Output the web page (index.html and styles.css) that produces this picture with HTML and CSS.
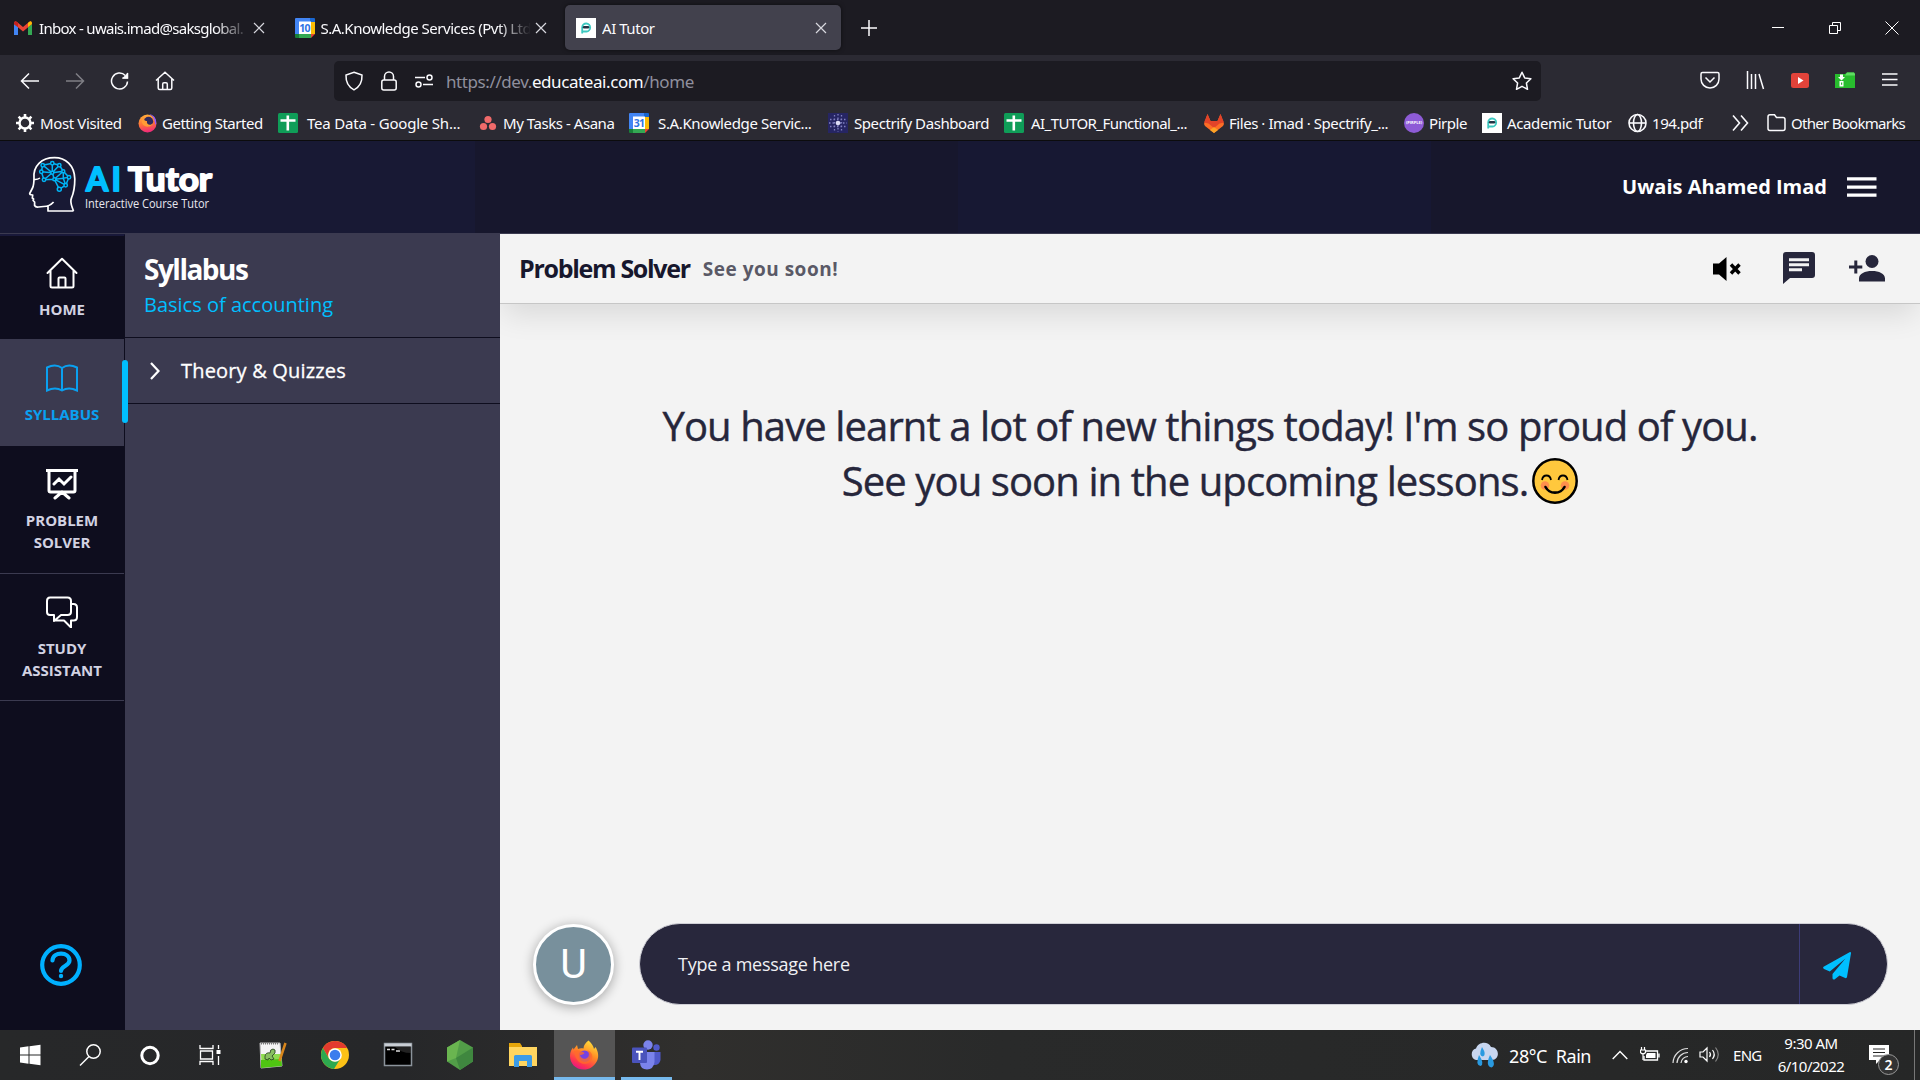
FILE: index.html
```html
<!DOCTYPE html>
<html lang="en">
<head>
<meta charset="utf-8">
<title>AI Tutor</title>
<link rel="stylesheet" href="styles.css">
</head>
<body>
<svg class="defs" aria-hidden="true">
  <symbol id="close" viewBox="0 0 12 12"><path d="M1 1l10 10M11 1L1 11" stroke="currentColor" stroke-width="1.2" fill="none"/></symbol>
  <symbol id="sheets" viewBox="0 0 20 20"><rect width="20" height="20" rx="1.5" fill="#0f9d58"/><path d="M8.5 2.5h2.6v3.7h6.4v2.6h-6.4V17.500H8.500V8.800H2.500V6.200h6z" fill="#fff"/></symbol>
  <symbol id="tutor" viewBox="0 0 20 20"><path fill="#fff" d="M0 0h20v20H0z"/><path d="M6.200 15.500V9.200a4 4 0 1 1 4.300 4.300H7" fill="none" stroke="#3cc8c0" stroke-width="1.800"/><rect x="6.800" y="8" width="6.500" height="2.600" rx="1.300" fill="#234"/></symbol>
  <symbol id="cal" viewBox="0 0 20 20"><path fill="#4285f4" d="M1 0h14v4H4v12H0V1q0-1 1-1z"/><path fill="#1967d2" d="M15 0h4q1 0 1 1v3h-5z"/><path fill="#fbbc04" d="M16 4h4v12h-4z"/><path fill="#34a853" d="M4 16h12v4H4z"/><path fill="#188038" d="M0 16h4v4H1q-1 0-1-1z"/><path fill="#ea4335" d="M16 16h4l-4 4z"/><path fill="#fff" d="M4 3.500h12V16H4z"/></symbol>
  <linearGradient id="fx" x1=".8" y1="0" x2=".3" y2="1"><stop offset="0" stop-color="#ffe63d"/><stop offset=".45" stop-color="#ff8a24"/><stop offset=".8" stop-color="#ff3450"/><stop offset="1" stop-color="#e31587"/></linearGradient>
  <symbol id="firefox" viewBox="0 0 30 30"><path fill="url(#fx)" d="M19.500.500c3.500 3 5 6 5.500 8.500l1.500-2c3 5 3.500 10 1.500 14-3 6-8 8.500-13 8.500C6 29.500 1 23 1 16c0-4 1.500-6.500 3-8.500l.5 2L8 5l1 4c2-1 3.500-1 5.500-.5 0-3 2-6 5-8z"/><path d="M10 13c4-4 9-3 11 1 1.500 4-1 8-5 8s-7-4-6-9z" fill="#7542e5"/><path d="M5 11c4-2 8 0 10.500 2-1 1.500-3 2-4.500 2 1 4.500 6 5 8.500 1.500 1-3 0-5-1.500-6.500 5 1.500 7 7 4 11-4 4-10 3.500-13 0-2.500-3-3.500-6-4-10z" fill="#ff6a2b" opacity=".8"/></symbol>
  <linearGradient id="fy" x1=".2" y1="0" x2=".4" y2="1"><stop offset="0" stop-color="#ffb33a"/><stop offset=".55" stop-color="#ff7139"/><stop offset="1" stop-color="#f0297a"/></linearGradient>
</svg>

<div class="tabs">
  <div class="tab">
    <svg class="fav" viewBox="0 0 20 20"><path fill="#4285f4" d="M1 17V6l4 3v8z"/><path fill="#34a853" d="M15 17V9l4-3v11z"/><path fill="#ea4335" d="M1 6q0-4 3-2l6 5 6-5q3-2 3 2l-9 7.500z"/><path fill="#c5221f" d="M1 6q0-4 3-2l1 1v4z"/><path fill="#fbbc04" d="M15 9V5l1-1q3-2 3 2z"/></svg>
    <span class="title fade t1">Inbox - uwais.imad@saksglobal.</span><svg class="x"><use href="#close"/></svg>
  </div>
  <div class="tab">
    <span class="calbox"><svg><use href="#cal"/></svg><b>10</b></span>
    <span class="title fade t2">S.A.Knowledge Services (Pvt) Ltd</span><svg class="x"><use href="#close"/></svg>
  </div>
  <div class="tab active">
    <svg class="fav"><use href="#tutor"/></svg>
    <span class="title">AI Tutor</span><svg class="x"><use href="#close"/></svg>
  </div>
  <svg class="plus" viewBox="0 0 16 16"><path d="M8 0v16M0 8h16" stroke="#fbfbfe" stroke-width="1.500"/></svg>
  <div class="wincontrols">
    <svg viewBox="0 0 14 14"><path d="M1 6.500h12" stroke="#fff"/></svg>
    <svg viewBox="0 0 14 14" fill="none" stroke="#fff"><path d="M1.500 4.500h8v8h-8zM4.500 4.500v-3h8v8h-3"/></svg>
    <svg viewBox="0 0 14 14"><path d="M.5.500l13 13M13.500.5l-13 13" stroke="#fff"/></svg>
  </div>
</div>

<div class="nav">
  <div class="navicons">
    <svg viewBox="0 0 20 20"><path d="M19 10H2M9 2.500L1.500 10 9 17.500"/></svg>
    <svg class="dim" viewBox="0 0 20 20"><path d="M1 10h17M11 2.500l7.500 7.500L11 17.500"/></svg>
    <svg viewBox="0 0 20 20"><path d="M17.500 10.500A8 8 0 1 1 15.300 4.500M17.500 2v5h-5"/><path d="M18 1.500v6h-6z" fill="#fbfbfe" stroke="none"/></svg>
    <svg viewBox="0 0 20 20"><path d="M1 9.500L10 1.200l9 8.300M3.200 8v9q0 1.500 1.500 1.500h10.600q1.500 0 1.500-1.500V8M7.700 18v-5q0-1.300 1.300-1.300h2q1.300 0 1.300 1.300v5"/></svg>
  </div>
  <div class="urlbar">
    <svg viewBox="0 0 20 20"><path d="M10 1.200l8 2.800c.3 7-2.500 12-8 14.800C4.500 16 1.700 11 2 4z"/></svg>
    <svg viewBox="0 0 20 20"><rect x="2.800" y="9" width="14.400" height="10" rx="2"/><path d="M5.500 9V5.500a4.500 4.500 0 0 1 9 0V9"/></svg>
    <svg viewBox="0 0 20 20"><path d="M1 6.500h10M9 13.500h10"/><circle cx="15.500" cy="6.500" r="2.500"/><circle cx="4.500" cy="13.500" r="2.500"/></svg>
    <span class="url">https://dev.<b>educateai.com</b>/home</span>
    <svg class="star" viewBox="0 0 20 20"><path d="M10 1.200l2.700 5.700 6.200.8-4.500 4.300 1.100 6.300-5.500-3-5.500 3L5.600 12 1.100 7.700l6.200-.8z" stroke-linejoin="round"/></svg>
  </div>
  <div class="tools">
    <svg viewBox="0 0 20 20"><path d="M2.500 2.500h15q1.500 0 1.500 1.500v5a9 9 0 0 1-18 0V4q0-1.500 1.500-1.500zM5.500 7.500L10 12l4.500-4.500"/></svg>
    <svg viewBox="0 0 20 20"><path d="M2.500 1v18M6.500 4v15M10.500 4v15M14 4L18.500 19"/></svg>
    <svg viewBox="0 0 20 20"><rect x="1" y="3" width="18" height="15" rx="2.500" fill="#e2433a" stroke="none"/><path d="M8 7v7l5.500-3.500z" fill="#fff" stroke="none"/></svg>
    <svg viewBox="0 0 20 20"><path fill="#28bd2e" stroke="none" d="M0 4h10l2-1.500h7l1 1.500v14H0z"/><path stroke="none" fill="#5fdc62" d="M10 5.500h10V4l-1-1.500h-7z"/><path stroke="none" fill="#fff" d="M5 4.500h3v2.500h2L6.500 10.500 3 7h2zM4.500 11h4v5.500h-4z"/><path d="M6 12.500h1.200v2.300H6z" stroke="none" fill="#28bd2e"/></svg>
    <svg viewBox="0 0 20 20"><path d="M2 4h15.500M2 9.500h15.500M2 15h15.500"/></svg>
  </div>
</div>

<div class="bookmarks">
  <div><svg viewBox="0 0 20 20"><circle cx="10" cy="10" r="5.500" fill="none" stroke="#fff" stroke-width="2.500"/><path d="M10 1v3M10 16v3M1 10h3M16 10h3M3.600 3.600l2.200 2.200M14.200 14.200l2.200 2.200M3.600 16.400l2.200-2.200M14.200 5.800l2.200-2.200" stroke="#fff" stroke-width="2.600"/></svg><span>Most Visited</span></div>
  <div><svg viewBox="0 0 20 20"><circle cx="9.500" cy="10.500" r="9" fill="url(#fy)"/><path d="M11 1c6 1 8 6 7 11-2-1 0-8-7-11z" fill="#9059ff"/><circle cx="10.500" cy="8.500" r="4.700" fill="#302a5c"/><path d="M6 3c-1 4 1 5 3 5-1 4 4 5 6 2-1 5-9 5-11 0-1-3 0-6 2-7z" fill="#ff9b35"/></svg><span>Getting Started</span></div>
  <div><svg><use href="#sheets"/></svg><span>Tea Data - Google Sh...</span></div>
  <div><svg viewBox="0 0 20 20" fill="#f06a6a"><circle cx="10" cy="6.500" r="3.600"/><circle cx="5.500" cy="13.500" r="3.600"/><circle cx="14.500" cy="13.500" r="3.600"/></svg><span>My Tasks - Asana</span></div>
  <div><i class="calbox"><svg><use href="#cal"/></svg><b>31</b></i><span>S.A.Knowledge Servic...</span></div>
  <div><svg viewBox="0 0 20 20"><path fill="#262563" d="M0 0h20v20H0z"/><g stroke="#8f8fd0" stroke-width="1.300" stroke-dasharray="1.500 2" opacity=".85"><path d="M10 1v18M1 10h18M6.500 2v16M13.500 2v16M2 6.500h16M2 13.500h16"/></g><circle cx="10" cy="10" r="2.300" fill="#dcdcf5"/></svg><span>Spectrify Dashboard</span></div>
  <div><svg><use href="#sheets"/></svg><span>AI_TUTOR_Functional_...</span></div>
  <div><svg viewBox="0 0 20 20"><path fill="#fc6d26" d="M0 11L3.500 1l3 7h7l3-7L20 11l-1 2-9 7-9-7z"/><path fill="#e24329" d="M3.500 1l3 7h7l3-7L20 9.500l-4.500 1L10 15l-5.500-4.500L0 9.500z"/><path fill="#fca326" d="M10 14l4 3-4 3-4-3z"/></svg><span>Files · Imad · Spectrify_...</span></div>
  <div><i class="pirple">(PIRPLE)</i><span>Pirple</span></div>
  <div><svg><use href="#tutor"/></svg><span>Academic Tutor</span></div>
  <div><svg viewBox="0 0 20 20" fill="none" stroke="#fbfbfe" stroke-width="1.600"><circle cx="10.500" cy="10" r="8.500"/><ellipse cx="10.500" cy="10" rx="4" ry="8.500"/><path d="M2 10h17"/></svg><span>194.pdf</span></div>
  <div><svg viewBox="0 0 20 20" fill="none" stroke="#fbfbfe" stroke-width="1.600"><path d="M2 2.500l6.500 7.500L2 17.500M10 2.500l6.500 7.500-6.500 7.500"/></svg></div>
  <div><svg viewBox="0 0 20 20" fill="none" stroke="#fbfbfe" stroke-width="1.500"><path d="M4 1.700h4.500L10.500 4.500H17q2 0 2 2v9q0 2-2 2H4q-2 0-2-2V3.700q0-2 2-2z"/></svg><span>Other Bookmarks</span></div>
</div>

<header class="appbar">
  <svg class="logo" viewBox="0 0 190 60">
    <path fill="none" stroke="#fff" stroke-width="1.700" stroke-linejoin="round" d="M45.500 56c-2-6-4-9-2-13C46.500 36 46.800 30 46.800 24 46.500 10 37.500 2.700 26.500 2.700 13.500 2.700 5 11 6 23c0 5 0 7-1.500 10L1.700 38.500q0 1.300 3 1.500l-.4 3 1.300 1-.5 1.500 1.500 1.500v3.500q1 2 4 1.500l5-.5q6 0 10-4.500M20 51v5h25.500"/>
    <path d="M6 24.500q3 .5 6-1.500" stroke="#fff" stroke-width="1.500" fill="none"/>
    <g fill="none" stroke="#00b4f5" stroke-width="1.500"><path d="M14.700 10.200l9.600-2 7 2 4 6 5.700 6-3.300 8-6.400 4-5-10-10.300.6-2.700-8zM13.300 16.800l11 1 7-7.600M14.700 10.200l9.600 7.600v-9.600M24.300 17.800l11-1.600M24.300 17.800L16 24.800M24.300 17.800l2 6.400 9-8M26.300 24.200l11.400 6M35.300 16.200v7l5.700-1M26.300 24.200l9-1 2.400 7"/><g fill="#171833"><circle cx="14.700" cy="10.200" r="1.700"/><circle cx="24.300" cy="8.200" r="1.700"/><circle cx="31.300" cy="10.200" r="1.700"/><circle cx="13.300" cy="16.800" r="1.700"/><circle cx="24.300" cy="17.800" r="1.500"/><circle cx="35.300" cy="16.200" r="1.500"/><circle cx="16" cy="24.800" r="1.700"/><circle cx="26.300" cy="24.200" r="1.500"/><circle cx="41" cy="22.200" r="1.700"/><circle cx="37.700" cy="30.200" r="1.700"/><circle cx="31.300" cy="34.200" r="2"/></g></g>
    <text class="brand ai" x="58 83.500" y="36">AI</text>
    <text class="brand" x="100" y="36" textLength="84" lengthAdjust="spacingAndGlyphs">Tutor</text>
    <text class="tag" x="57" y="53" textLength="124" lengthAdjust="spacingAndGlyphs">Interactive Course Tutor</text>
  </svg>
  <span class="user">Uwais Ahamed Imad</span>
  <svg class="burger" viewBox="0 0 30 20"><path d="M0 1.800h29.500M0 10.200h29.500M0 18.200h29.500" stroke="#fff" stroke-width="3.200"/></svg>
</header>

<div class="app">
  <nav class="rail">
    <a class="home"><svg viewBox="0 0 32 32"><path d="M1.500 16L16 1.800 30.500 16M4.500 13.500V29q0 1.500 1.500 1.500h20q1.500 0 1.500-1.500V13.500M12.500 30V21.500q0-1 1-1h5q1 0 1 1V30" fill="none" stroke="#fff" stroke-width="2" stroke-linecap="round" stroke-linejoin="round"/></svg>HOME</a>
    <a class="on"><svg viewBox="0 0 32 32" fill="none" stroke="#0aa0f0" stroke-width="2"><path d="M16 6c-4-3-10-3-15-.5v23c5-2.500 11-2.500 15 0 4-2.500 10-2.500 15 0v-23C26 3 20 3 16 6zM16 6v22"/></svg>SYLLABUS</a>
    <a class="solver"><svg viewBox="0 0 32 32" fill="none" stroke="#fff" stroke-width="3"><path d="M0 2.500h32M3 3v19.500q0 1.500 1.500 1.500h23q1.500 0 1.500-1.500V3M8 16l5-5 5 5 7-7M9 30l7-6 7 6" stroke-linecap="round"/></svg>PROBLEM<br>SOLVER</a>
    <a><svg viewBox="0 0 32 32" fill="none" stroke="#fff" stroke-width="2" stroke-linejoin="round"><path d="M4 1.500h17.500q3.500 0 3.500 3.500v11q0 3-3.500 3H15l-7 6v-6H4q-3 0-3-3V5q0-3.500 3-3.500zM25.500 8h2q3.500 0 3.500 3.500V21q0 3.500-3.500 3.500H25v7l-7-7H8.500"/></svg>STUDY<br>ASSISTANT</a>
    <svg class="help" viewBox="0 0 42 42" fill="none" stroke="#00b0ff"><circle cx="21" cy="21" r="18.800" stroke-width="4.200"/><path d="M12.500 16.500C13 7 29.500 7.500 29.500 16.500c0 5.500-8.500 5.500-8.500 10.500" stroke-width="4.200" stroke-linecap="round"/><circle cx="21" cy="32" r="2.200" fill="#00b0ff" stroke="none"/></svg>
  </nav>

  <aside class="panel">
    <div class="phead"><h2>Syllabus</h2><p>Basics of accounting</p></div>
    <div class="prow"><svg viewBox="0 0 10 18"><path d="M1 1l7.500 8L1 17" fill="none" stroke="#fff" stroke-width="2.200"/></svg>Theory &amp; Quizzes</div>
  </aside>

  <main>
    <div class="mhead">
      <h1>Problem Solver</h1><span class="sub">See you soon!</span>
      <svg class="mute" viewBox="0 0 28 24"><path d="M0 6.500h6L13.500 0v24L6 17.500H0z"/><path d="M18 7.500l8.500 9M26.500 7.500l-8.500 9" stroke="#000" stroke-width="3.400"/></svg>
      <svg class="chat" viewBox="0 0 32 32"><path fill="#26263b" d="M3 0h26q3 0 3 3v20q0 3-3 3H7l-7 6V3q0-3 3-3z"/><path d="M6 7.700h20M6 12.700h20M6 17.700h13" stroke="#f3f3f3" stroke-width="3"/></svg>
      <svg class="add" viewBox="0 0 36 27" fill="#26263b"><circle cx="23" cy="6.500" r="6.500"/><path d="M10 26.500v-3c0-5 6-7.500 13-7.500s13 2.500 13 7.500v3zM5.300 5.500h3v5h5v3h-5v5h-3v-5H0v-3h5.300z"/></svg>
    </div>
    <div class="msg">
      <div class="l1">You have learnt a lot of new things today! I'm so proud of you.</div>
      <div class="l2">See you soon in the upcoming lessons.<svg viewBox="0 0 46 46" fill="none"><circle cx="23" cy="23" r="21.700" fill="#ffc83d" stroke="#000" stroke-width="2.500"/><circle cx="13" cy="27.500" r="4.300" fill="#ff8e4c"/><circle cx="33" cy="27.500" r="4.300" fill="#ff8e4c"/><path d="M10 22c1-6 8-6 9 0M26.500 22c1-6 8-6 9 0" stroke="#000" stroke-width="1.800"/><path d="M13.500 29c4 7.500 15 7.500 19 0" stroke="#000" stroke-width="2.600" stroke-linecap="round"/></svg></div>
    </div>
    <div class="composer">
      <div class="avatar">U</div>
      <div class="field"><span>Type a message here</span><div class="send"><svg viewBox="0 0 28 28"><path fill="#00bfff" d="M27 0q1.200 0 1 1.200L24 25q-.3 1.500-1.800 1L16.500 23.500 11.500 27.500q-2 .5-2-1.500v-4L22.500 6.500 6.800 19.500 1 17q-1.800-1.200 0-2.400z"/></svg></div></div>
    </div>
  </main>
</div>

<footer class="taskbar">
  <div class="apps">
    <div class="sys"><svg viewBox="0 0 30 30" fill="#fff"><path d="M5 7.500l8.500-1.200v8.200H5zM14.500 6.200L25.500 4.700v9.800h-11zM5 15.500h8.500v8.200L5 22.500zM14.500 15.500h11v9.800l-11-1.500z"/></svg></div>
    <div class="sys"><svg viewBox="0 0 30 30" fill="none" stroke="#fff" stroke-width="1.500"><circle cx="18.500" cy="11.500" r="6.700"/><path d="M14 16.500L5 25.500"/></svg></div>
    <div class="sys"><svg viewBox="0 0 30 30"><circle cx="15" cy="15.500" r="8.200" fill="none" stroke="#fff" stroke-width="3"/></svg></div>
    <div class="sys"><svg viewBox="0 0 30 30" fill="none" stroke="#fff" stroke-width="1.300"><path d="M5 5v3.500h13V5M5 25v-3.500h13V25M5.500 11h12v8h-12zM23.500 5v4M23.500 16v9"/><path d="M21.500 10h4v4h-4z" fill="#fff" stroke="none"/></svg></div>
    <div><svg viewBox="0 0 30 30"><path fill="#f4f4f4" stroke="#bbb" d="M2 3h20l2 23-21 2z"/><path fill="#8fdc50" d="M3 14h20l.5 6-20 2z"/><path fill="#4fc412" d="M3 20l20.500-1 .5 7-21 2z"/><path d="M3 3.500h18" stroke="#777" stroke-width="2" stroke-dasharray="1 1"/><path fill="#88c060" stroke="#253b20" stroke-width=".8" d="M7 16q1-4 5-3 0-4 3-4 3 0 2 4l-3 3 2 3-3 1-2-2-1 2-3-1z"/><path d="M27.500 3L21.500 21" stroke="#d9861c" stroke-width="2.500"/></svg></div>
    <div><svg viewBox="0 0 30 30"><circle cx="15" cy="15" r="14" fill="#fbc116"/><path fill="#e33b2e" d="M15 1a14 14 0 0 1 12.200 7H15a7 7 0 0 0-6 10.500L2.900 8A14 14 0 0 1 15 1z"/><path fill="#2da94f" d="M2.900 8A14 14 0 0 0 14 29l6.500-10.500a7 7 0 0 1-11.600 0z"/><circle cx="15" cy="15" r="6.800" fill="#fff"/><circle cx="15" cy="15" r="5.300" fill="#3b7ded"/></svg></div>
    <div><svg viewBox="0 0 30 30"><rect x="1.500" y="3.500" width="27" height="22" fill="#000" stroke="#8b939b" stroke-width="1.500"/><path fill="#c9ced4" d="M1.500 3.500h27v3h-27z"/><path d="M4 9.500h3M8.500 9.500h3M13 11h4" stroke="#ddd" stroke-width="1.300"/><path fill="#444" d="M12 7h16v6q-10 0-16-6z" opacity=".5"/></svg></div>
    <div><svg viewBox="0 0 30 30"><path fill="#529e48" d="M15 0l13 7.500v14L15 30 2 21.500v-14z"/><path fill="#6ab550" d="M15 0L11 18 2 21.500v-14z"/><path fill="#3f873f" d="M28 7.500v14L15 30l-4-12z"/></svg></div>
    <div><svg viewBox="0 0 30 30"><path fill="#e5a50a" d="M1 3h11l2 3v4H1z"/><path fill="#ffd560" d="M1 7h28v19H1z"/><path fill="#3c9be6" d="M6 16.500q0-1.500 1.500-1.500h15q1.500 0 1.500 1.500V27h-5v-6h-8v6H6z"/></svg></div>
    <div class="cur"><svg><use href="#firefox"/></svg></div>
    <div class="run"><svg viewBox="0 0 30 30"><circle cx="17" cy="5" r="4.700" fill="#7b83eb"/><circle cx="25.500" cy="7.500" r="3.200" fill="#5059c9"/><path fill="#5059c9" d="M19 12h10.500v8q-1 5-6 5h-4z"/><path fill="#7b83eb" d="M10 12h13.500v10q-1 7.500-7.500 7.500T9 23z"/><rect x="1" y="7.500" width="15" height="15.500" rx="1" fill="#4a53bc"/><path d="M5 11.700h7M8.500 12v8" stroke="#fff" stroke-width="1.900"/></svg></div>
  </div>
  <div class="tray">
    <svg class="weather" viewBox="0 0 28 26"><path fill="#c8d6ef" d="M6 18a6 6 0 0 1 0-11.500C8 0 18-1.500 21 5c9 0 9 13 1 13z"/><path fill="#2a9ae0" d="M12 5q5 8 1 9.500Q8 14 12 5zM9 13q6 9 1.500 11Q5 23 9 13zM20 13q7 10 1.500 12.500Q15 24 20 13z"/></svg>
    <span class="temp">28°C&nbsp; Rain</span>
    <svg class="up" viewBox="0 0 16 10"><path d="M.7 9L8 1.500 15.300 9" fill="none" stroke="#fff" stroke-width="1.400"/></svg>
    <svg class="bat" viewBox="0 0 20 16" fill="none" stroke="#fff" stroke-width="1.300"><path d="M6 4h11.500v9H4v-4M19 6.500v4"/><path fill="#fff" stroke="none" d="M7 6h8.500v5H6V8z"/><path d="M1.500 0v3M4.500 0v3M.5 3h5v2.500q-2.500 3-5 0zM3 6v7" stroke-width="1.200"/></svg>
    <svg class="wifi" viewBox="0 0 17 17" fill="none" stroke="#ddd" stroke-width="1.200"><path d="M1 16A15 15 0 0 1 16 1.500M5 16A11 11 0 0 1 16 5.500M9 16a7 7 0 0 1 7-6.500"/><circle cx="14" cy="14.500" r="1.700" fill="#fff" stroke="none"/></svg>
    <svg class="vol" viewBox="0 0 21 18" fill="none" stroke="#fff" stroke-width="1.200"><path d="M1 6h3l4-4v13l-4-4H1zM10.500 6q2 2.500 0 5M13.500 4q3.500 4.500 0 9"/><path d="M16.500 1.500q5.500 7 0 14" stroke="#888"/></svg>
    <span class="lang">ENG</span>
    <div class="clock">9:30 AM<br>6/10/2022</div>
    <div class="notif"><svg viewBox="0 0 20 20"><path fill="#fff" d="M0 0h20v15h-9l-4 4v-4H0z"/><path d="M4 4h12M4 7.500h12M4 11h12" stroke="#262626"/></svg><b>2</b></div>
  </div>
</footer>
</body>
</html>
```
FILE: styles.css
```css
* { box-sizing: border-box; }
body { margin: 0; width: 1920px; height: 1080px; overflow: hidden; display: flex; flex-direction: column; font-family: "Open Sans", "Noto Sans", sans-serif; background: #f3f3f3; }
.defs { position: absolute; width: 0; height: 0; }
svg { flex: none; display: block; }
h1, h2, p { margin: 0; }

/* Browser chrome */
.tabs { flex: none; height: 55px; background: #1c1b22; display: flex; align-items: center; padding-left: 2px; color: #fbfbfe; font: 15px/22px "Noto Sans", sans-serif; letter-spacing: -.45px; }
.tab { width: 276px; height: 45px; margin-right: 5.500px; padding: 0 13px 0 11px; display: flex; align-items: center; }
.tab.active { padding-right: 14px; }
.active { background: #42414d; border-radius: 5px; box-shadow: 0 0 4px #0008; }
.fav { width: 20px; height: 20px; }
.title { flex: 1; margin-left: 6px; white-space: nowrap; overflow: hidden; }
.t1 { letter-spacing: -.7px; }
.t2 { letter-spacing: -.5px; }
.fade { -webkit-mask-image: linear-gradient(90deg, #000 84%, transparent); mask-image: linear-gradient(90deg, #000 84%, transparent); }
.x { width: 12px; height: 12px; color: #d8d8df; margin-left: 4px; }
.plus { width: 16px; height: 16px; margin-left: 14px; }
.wincontrols { margin-left: auto; margin-right: 21px; display: flex; gap: 43px; }
.wincontrols svg { width: 14px; height: 14px; }
.calbox { position: relative; display: block; width: 20px; height: 20px; flex: none; font-style: normal; }
.calbox svg { width: 20px; height: 20px; }
.calbox b { position: absolute; inset: 0; font: 700 10.500px/20px "Open Sans", sans-serif; letter-spacing: -.8px; color: #2f74e4; text-align: center; }

.nav { flex: none; height: 50px; background: #2b2a33; display: flex; align-items: center; }
.nav svg { width: 20px; height: 20px; fill: none; stroke: #fbfbfe; stroke-width: 1.500; }
.navicons { width: 334px; padding-left: 20px; display: flex; gap: 25px; }
.navicons svg { margin-top: 1px; }
.dim { opacity: .4; }
.urlbar { width: 1207px; height: 40px; margin-top: 1px; border-radius: 5px; background: #1c1b22; display: flex; align-items: center; padding: 0 9px 0 10px; gap: 15px; }
.url { flex: 1; margin-left: -3px; color: #8f8f9d; font: 17px/24px "Noto Sans", sans-serif; letter-spacing: -.41px; margin-top: 3px; }
.url b { font-weight: 400; color: #fbfbfe; }
.tools { margin-left: auto; margin-right: 20px; display: flex; gap: 25px; }

.bookmarks { flex: none; height: 36px; background: #2b2a33; border-bottom: 1px solid #0c0c0d; padding-left: 15px; color: #fbfbfe; font: 15px/20px "Noto Sans", sans-serif; letter-spacing: -.45px; display: grid; grid-template-columns: 123px 140px 200px 151px 199px 176px 200px 200px 78px 145px 104px 35px 150px; }
.bookmarks > div { display: flex; align-items: center; gap: 5px; white-space: nowrap; }
.bookmarks svg { width: 20px; height: 20px; }
.bookmarks > div:nth-child(1) { letter-spacing: -.38px; }
.bookmarks > div:nth-child(2) { letter-spacing: -.48px; gap: 4px; }
.bookmarks > div:nth-child(3), .bookmarks > div:nth-child(5) { gap: 9px; }
.bookmarks > div:nth-child(3) { letter-spacing: -.2px; }
.bookmarks > div:nth-child(5), .bookmarks > div:nth-child(10) { letter-spacing: -.36px; }
.bookmarks > div:nth-child(6) { gap: 6px; letter-spacing: -.42px; }
.bookmarks > div:nth-child(7) { gap: 7px; letter-spacing: -.55px; }
.bookmarks > div:nth-child(13) { letter-spacing: -.72px; }
.pirple { width: 20px; height: 20px; border-radius: 50%; background: #8d5bd6; color: #fff; font: 700 4px/20px "Open Sans", sans-serif; letter-spacing: 0; text-align: center; }

/* Application header */
.appbar { flex: none; height: 93px; border-bottom: 1px solid #3b3a50; background: linear-gradient(90deg, #181934 475px, #17172d 475px, #17172d 958px, #171833 958px, #171833 1431px, #17172c 1431px); display: flex; align-items: center; padding: 0 43px 0 28px; }
.logo { width: 190px; height: 60px; margin-top: -5px; overflow: visible; }
.brand { font: 700 32px Lato, sans-serif; fill: #fff; stroke: #fff; stroke-width: 1.800px; stroke-linejoin: round; }
.ai { fill: #00bfff; stroke: #00bfff; }
.tag { font: 13px "Open Sans", sans-serif; fill: #e8e8f0; }
.user { margin-left: auto; color: #fff; font-size: 20px; font-weight: 700; line-height: 26px; margin-top: -1px; }
.burger { width: 30px; height: 20px; margin-left: 20px; }

.app { flex: 1; min-height: 0; display: flex; }
.rail { position: relative; z-index: 1; width: 125px; background: #0e0d1e; border-top: 2px solid #19193a; border-right: 1px solid #0e0d1e; display: flex; flex-direction: column; align-items: center; }
.rail a { width: 124px; height: 127px; padding-top: 22px; border-bottom: 1px solid #3b3a50; display: flex; flex-direction: column; align-items: center; text-align: center; color: #d2d2e2; font-size: 15px; font-weight: 700; line-height: 22px; }
.rail a svg { width: 32px; height: 32px; margin-bottom: 9px; }
.rail a.home { height: 104px; padding-top: 21px; }
.rail a.solver { height: 128px; }
.rail a.on { position: relative; height: 106px; background: #3b3a50; color: #0aa0f0; }
.rail a.on::after { content: ""; position: absolute; left: 122px; top: 20px; width: 6px; height: 63px; border-radius: 3px; background: #00bfff; }
.rail .help { width: 42px; height: 42px; margin: auto 3px 44px 0; }

.panel { width: 375px; background: #3b3a50; color: #fff; }
.phead { height: 104px; border-bottom: 1px solid #0e0d1e; padding: 16px 19px; }
.phead h2 { font-size: 28px; line-height: 38px; font-weight: 700; letter-spacing: -1.500px; }
.phead p { color: #00bfff; font-size: 20px; line-height: 32px; margin-top: 1px; }
.prow { height: 66px; border-bottom: 1px solid #0e0d1e; padding-left: 25px; display: flex; align-items: center; font-size: 20px; letter-spacing: .18px; -webkit-text-stroke: .3px #fff; }
.prow svg { width: 10px; height: 18px; margin-right: 21px; }

main { flex: 1; display: flex; flex-direction: column; background: #f3f3f3; }
.mhead { height: 70px; border-bottom: 1px solid #c6c6c6; box-shadow: 0 14px 30px -4px #0000001c; clip-path: inset(0 0 -60px 0); display: flex; align-items: center; padding: 0 35px 0 19px; }
.mhead h1 { font-size: 25px; line-height: 34px; margin-top: -2px; font-weight: 700; letter-spacing: -1.300px; color: #17172d; }
.sub { margin-left: 13px; font-size: 19px; font-weight: 700; letter-spacing: .5px; color: #5a5966; }
.mute { width: 28px; height: 24px; margin-left: auto; }
.chat { width: 32px; height: 32px; margin-left: 42px; margin-top: -1px; }
.add { width: 36px; height: 27px; margin-left: 34px; }
.msg { flex: 1; padding: 94px 0 0; display: flex; flex-direction: column; align-items: center; font-size: 40px; line-height: 55px; letter-spacing: -.900px; color: #26263b; -webkit-text-stroke: .4px #26263b; white-space: nowrap; }
.msg div { display: flex; align-items: center; }
.msg svg { width: 46px; height: 46px; margin-left: 4px; }
.composer { display: flex; align-items: center; padding: 0 32px 25px 33px; }
.avatar { width: 81px; height: 81px; border: 3px solid #fff; border-radius: 50%; background: #78909c; box-shadow: 0 2px 12px #0005; color: #fff; font: 41px/75px Roboto, sans-serif; text-align: center; }
.field { margin-left: 25px; width: 1249px; height: 82px; border: 1px solid #cfcfd6; border-radius: 41px; background: #28273c; display: flex; align-items: center; overflow: hidden; color: #f0f0f4; font-size: 18px; letter-spacing: -.25px; }
.field span { flex: 1; padding-left: 38px; }
.send { width: 88px; height: 80px; border-left: 1px solid #3d3c78; display: flex; align-items: center; padding-left: 23px; }
.send svg { width: 28px; height: 28px; margin-top: 3px; }

/* Taskbar */
.taskbar { flex: none; height: 50px; background: linear-gradient(90deg, #272829 0, #262729 400px, #302f2d 690px, #292a2a 1000px, #262727); display: flex; color: #fff; font-family: "Noto Sans", sans-serif; }
.apps { display: flex; }
.apps div { width: 62.400px; height: 50px; display: flex; align-items: center; justify-content: center; }
.apps .sys { width: 60.100px; }
.apps .sys + div:not(.sys) { margin-left: 1.500px; }
.apps svg { width: 30px; height: 30px; }
.apps .cur { width: 61px; background: #555; border-bottom: 3px solid #76b9ed; margin-right: 6px; padding-top: 3px; }
.apps .run { width: 51px; border-bottom: 3px solid #76b9ed; padding-top: 3px; }
.tray { margin-left: auto; display: flex; align-items: center; padding-right: 5px; }
.weather { width: 28px; height: 26px; margin-right: 11px; }
.temp { width: 103px; font-size: 18px; line-height: 24px; padding-top: 2px; letter-spacing: -.4px; white-space: nowrap; }
.up { width: 16px; height: 10px; margin-right: 12px; }
.bat { width: 20px; height: 16px; margin-right: 12px; }
.wifi { width: 17px; height: 17px; margin-right: 10px; }
.vol { width: 21px; height: 18px; margin-right: 13px; }
.lang { width: 39px; font-size: 15px; letter-spacing: -.7px; }
.clock { width: 78px; font-size: 15px; line-height: 23px; letter-spacing: -.5px; text-align: center; white-space: nowrap; }
.notif { position: relative; margin-left: 19px; width: 46px; height: 50px; border-right: 1px solid #777; padding-top: 15px; }
.notif svg { width: 20px; height: 20px; }
.notif b { position: absolute; left: 9px; top: 24px; width: 21px; height: 21px; border: 1px solid #999; border-radius: 50%; background: #333; font: 600 14px/19px "Noto Sans", sans-serif; text-align: center; }
```
